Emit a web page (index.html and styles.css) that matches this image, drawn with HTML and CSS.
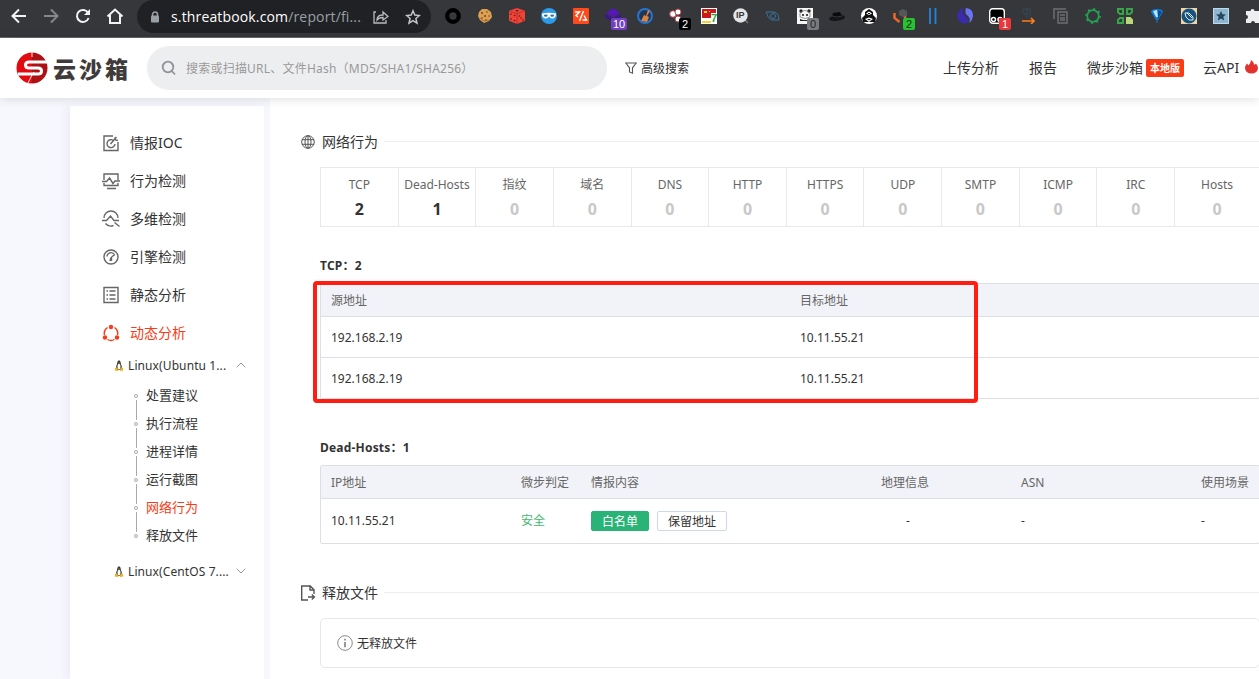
FILE: index.html
```html
<!DOCTYPE html>
<html lang="zh-CN">
<head>
<meta charset="utf-8">
<title>云沙箱</title>
<link rel="stylesheet" href="styles.css">
</head>
<body>
<div class="toolbar">
  <div class="nav-icons">
    <svg width="32" height="32" viewBox="0 0 32 32" fill="none" stroke="#f1f3f4" stroke-width="2"><path d="M26 16H13M19 9.500l-6.500 6.500 6.500 6.500"/></svg>
    <svg width="32" height="32" viewBox="0 0 32 32" fill="none" stroke="#85878a" stroke-width="2"><path d="M12 16h13M19 9.500l6.500 6.500-6.500 6.500"/></svg>
    <svg width="32" height="32" viewBox="0 0 32 32" fill="none" stroke="#f1f3f4" stroke-width="2"><path d="M24.200 13A6 6 0 1 0 24.600 18"/><path d="M26 9v6h-6z" fill="#f1f3f4" stroke="none"/></svg>
    <svg width="32" height="32" viewBox="0 0 32 32" fill="none" stroke="#f1f3f4" stroke-width="2"><path d="M11.500 16.500L19 9.500l7.500 7M14 15v8h10v-8"/></svg>
  </div>
  <div class="address">
    <svg class="lock" width="10" height="12" viewBox="0 0 10 12"><path d="M2.500 5V3.500a2.500 2.500 0 0 1 5 0V5" fill="none" stroke="#9aa0a6" stroke-width="1.500"/><rect x="1" y="4.500" width="8" height="7" rx="1" fill="#9aa0a6"/></svg>
    <span class="url"><b>s.threatbook.com</b>/report/fi...</span>
    <svg class="share" width="16" height="16" viewBox="0 0 16 16" fill="none" stroke="#b9bbbe" stroke-width="1.300"><path d="M3 3H1v11h12v-3M4 11c0-3 2-5 6-5V3l5 4.500L10 11V8.500C7 8.500 5.500 9 4 11z"/></svg>
    <svg class="star" width="16" height="16" viewBox="0 0 16 16" fill="none" stroke="#c3c5c8" stroke-width="1.500"><path d="M8 1.800l1.800 4.300 4.600.4-3.500 3 1.100 4.600L8 11.600l-4 2.500 1.100-4.600-3.500-3 4.600-.4z"/></svg>
  </div>
  <div class="extensions">
    <span class="ext"><svg viewBox="0 0 16 16"><circle cx="8" cy="8" r="5.800" fill="#37383b" stroke="#000" stroke-width="4.200"/></svg></span>
    <span class="ext"><svg viewBox="0 0 16 16"><path d="M2 4l3-3 5 0 4 3 1 5-3 4-5 2-4-3-2-4z" fill="#dca052"/><path d="M3 10l4 3 5-1" fill="none" stroke="#b87430"/><g fill="#76421c"><circle cx="5" cy="5" r="1"/><circle cx="10" cy="4" r=".8"/><circle cx="8" cy="8" r="1"/><circle cx="12" cy="8" r=".8"/><circle cx="5" cy="10" r=".8"/><circle cx="9" cy="12" r=".8"/></g></svg></span>
    <span class="ext"><svg viewBox="0 0 16 16"><path d="M8 0l8 2.700v10L8 16 0 12.700v-10z" fill="#ef4437"/><path d="M0 2.700l8 3 8-3M8 5.700V16" fill="none" stroke="#9c2620" stroke-width=".6"/><g fill="#5d1916"><ellipse cx="8" cy="2.800" rx="1.500" ry=".8"/><circle cx="2" cy="6" r=".8"/><circle cx="5.500" cy="7.500" r=".8"/><circle cx="2" cy="11" r=".8"/><circle cx="5.500" cy="12.500" r=".8"/><circle cx="10.500" cy="8" r=".8"/><circle cx="12" cy="10" r=".8"/><circle cx="14" cy="12" r=".8"/></g></svg></span>
    <span class="ext"><svg viewBox="0 0 16 16"><circle cx="8" cy="8" r="8" fill="#2b9bea"/><path d="M1 5.500Q8 4 15 5.500q0 5-4 5-2 0-3-2-1 2-3 2-4 0-4-5z" fill="#fff"/><ellipse cx="4.800" cy="7.600" rx="1.900" ry="1.200" fill="#2b6fb0"/><ellipse cx="11.200" cy="7.600" rx="1.900" ry="1.200" fill="#2b6fb0"/></svg></span>
    <span class="ext"><svg viewBox="0 0 16 16"><rect width="16" height="16" rx="1" fill="#ff4a1c"/><path d="M2 4h4.500L3 7.500l2 1.500M10.500 3L6.500 13M11 7.500l2.500 4.500H9.500" fill="none" stroke="#fff" stroke-width="1.400"/></svg></span>
    <span class="ext"><svg viewBox="0 0 16 16"><path d="M8 0l7 5-7 4-7-4z" fill="#5417b8"/><path d="M0 6l8 4 8-4v3l-8 5-8-5z" fill="#3c1590"/></svg><i class="count purple">10</i></span>
    <span class="ext"><svg viewBox="0 0 16 16"><circle cx="8" cy="8" r="7" fill="#263650" stroke="#2374d4" stroke-width="2"/><path d="M11 2l2 1-3 5 2 1-2 5-6-1 3-6 2 1z" fill="#d88743"/></svg></span>
    <span class="ext"><svg viewBox="0 0 16 16"><g fill="#fff" stroke="#ad4148" stroke-width="1"><circle cx="4" cy="6" r="3.300"/><circle cx="9" cy="4" r="3"/><circle cx="9" cy="11" r="3"/></g></svg><i class="count black">2</i></span>
    <span class="ext"><svg viewBox="0 0 16 16"><path fill="#fff" d="M0 0h16v16H0z"/><path fill="#c91820" d="M1 1h14v9H1z"/><path fill="#f4d52d" d="M3 3h3v2H3zM1 13h9v2H1zM8 3h1v1H8z"/></svg><i class="seven">7</i></span>
    <span class="ext"><svg viewBox="0 0 16 16"><path d="M12 12l3 3" stroke="#777" stroke-width="1.500"/><circle cx="7.500" cy="7.500" r="7.200" fill="#e4e5e8"/></svg><i class="ip">IP</i></span>
    <span class="ext"><svg viewBox="0 0 16 16" fill="none" stroke="#39759c"><path d="M1 4h8q5 1 5 8H7Q3 11 1 4z"/><circle cx="8" cy="8" r="2.500"/></svg></span>
    <span class="ext"><svg viewBox="0 0 16 16"><path fill="#f7f7f7" d="M0 0h16v16H0z"/><g fill="#222"><circle cx="4" cy="3" r="1.700"/><circle cx="12" cy="3" r="1.700"/><circle cx="6" cy="7" r="1.100"/><circle cx="10" cy="7" r="1.100"/><path d="M3 11l3 1 4 0 4-1v2H3z"/></g><path d="M3 5q5-5 10 0v4q-5 3-10 0z" fill="none" stroke="#666" stroke-width=".7"/></svg><i class="count gray">0</i></span>
    <span class="ext"><svg viewBox="0 0 16 16"><ellipse cx="8" cy="10" rx="8" ry="2.800" fill="#141518" transform="rotate(-7 8 10)"/><path d="M3 9l1-4 7-1 2 4q-4 3-10 1z" fill="#090a0b"/><path d="M3 8q5 2 10 0" fill="none" stroke="#55565a" stroke-width=".6"/></svg></span>
    <span class="ext"><svg viewBox="0 0 16 16"><circle cx="8" cy="8" r="8" fill="#fff"/><path d="M8 1l4 3 0 3 3 3-1 4H2l-1-4 3-3 0-3z" fill="#111"/><path d="M5 5.500l3-2 3 2-3 1.500zM4 11l4-1.500 4 1.500-4 3z" fill="#fff"/><path d="M7 5h2v1H7zM6 11h4l-2 1.500z" fill="#111"/></svg></span>
    <span class="ext"><svg viewBox="0 0 16 16"><path d="M1.500 5v5l5 4M12 5v5" fill="none" stroke="#f26524" stroke-width="2.500"/><path d="M6 3l4-2 4 2v5l-4 1-4-2z" fill="#55575b"/></svg><i class="count green">2</i></span>
    <span class="ext"><svg viewBox="0 0 16 16"><path d="M5 0v16M10.500 0v16" stroke="#2385db" stroke-width="1.800"/></svg></span>
    <span class="ext"><svg viewBox="0 0 16 16"><path d="M7 0C1 1-2 8 2 13q4 4 8 2 3-3-1-6Q4 5 7 0z" fill="#382ca9"/><path d="M9 0q7 1 7 7 0 5-4 8 2-4-1-7Q7 5 9 0z" fill="#6b74f7"/></svg></span>
    <span class="ext"><svg viewBox="0 0 16 16"><rect x=".7" y=".7" width="14.600" height="14.600" rx="3" fill="#000" stroke="#fff" stroke-width="1.400"/><g fill="none" stroke="#fff" stroke-width="1.500"><circle cx="4.500" cy="11.500" r="2"/><circle cx="11" cy="11.500" r="2"/></g></svg><i class="count red">1</i></span>
    <span class="ext"><svg viewBox="0 0 16 16"><path d="M10 1H4a2.500 2.500 0 0 0 0 5h2V1M9 1v9M6 6v4" fill="none" stroke="#354550" stroke-width="1.300"/><path d="M1 13h12M10 10l3 3-3 3" fill="none" stroke="#ff7b18" stroke-width="1.700"/></svg></span>
    <span class="ext"><svg viewBox="0 0 16 16" fill="none" stroke="#6d6f71" stroke-width="1.500"><path d="M1 11V1h12M5 15V4h9v11zM7 7h5M7 10h5M7 12h5"/></svg></span>
    <span class="ext"><svg viewBox="0 0 16 16" fill="none" stroke="#23a455"><circle cx="8" cy="8" r="5.800" stroke-width="1.700"/><circle cx="8" cy="8" r="7.100" stroke-width="1.600" stroke-dasharray="2 3.576"/></svg></span>
    <span class="ext"><svg viewBox="0 0 16 16" fill="none" stroke="#38a449" stroke-width="2"><path d="M1 1h5v5H3L1 4zM10 1h5v3l-2 2h-3zM1 12l2-2h3v5H1z"/><path fill="#b7d778" stroke="#b7d778" d="M10 10h3l2 2v3h-5z"/></svg></span>
    <span class="ext"><svg viewBox="0 0 16 16"><path d="M2 4q0-3 6-3t6 3L9 12H7z" fill="#137ad6"/><path d="M4 3l4-1 1 7H7z" fill="#bce7ff"/><path d="M9 2l4 2-4 7z" fill="#064f9e"/><path d="M7 12h2v3H7z" fill="#2e5578"/></svg></span>
    <span class="ext"><svg viewBox="0 0 16 16"><path fill="#ecd5a8" d="M0 0h16v16H0z"/><circle cx="8" cy="8" r="7.500" fill="#15527d"/><path d="M4 5h4l4 4v3H8L5 9zM6 5l5 5" fill="none" stroke="#e4edf1"/></svg></span>
    <span class="ext"><svg viewBox="0 0 16 16"><path fill="#8fb6d0" d="M0 0h16v16H0z"/><path fill="none" stroke="#c4d9e7" d="M.5.5h15v15H.5z"/><path d="M8 3l1.500 3.300 3.500.2-2.700 2.300.9 3.700L8 10.500l-3.200 2 .9-3.700L3 6.500l3.500-.2z" fill="#25475f"/></svg></span>
    <span class="ext"><svg viewBox="0 0 16 16"><path fill="#eceef0" d="M1 3h4.500a2 2 0 1 1 4 0H14v4a2 2 0 1 1 0 4v4h-4a2 2 0 1 0-4 0H1v-4a2 2 0 1 0 0-4z"/></svg></span>
  </div>
</div>

<header class="header">
  <div class="brand">
    <svg width="32" height="32" viewBox="0 0 32 32"><path d="M16 0.500a15.500 15.500 0 0 0 0 31z" fill="#e00c12"/><path d="M16 .5a15.500 15.500 0 0 1 0 31z" fill="#ad1116"/><path d="M31 10H13q-3.500 0-3.500 3t3.500 3h9q3.500 0 3.500 3T22 22H2" fill="none" stroke="#fff" stroke-width="3"/><path d="M18 20l-2 3-4 8M16 0v5" fill="none" stroke="#fff" stroke-width=".9"/></svg>
    <span class="brand-name">云沙箱</span>
  </div>
  <div class="search">
    <svg width="16" height="16" viewBox="0 0 16 16" fill="none" stroke="#919398" stroke-width="1.800"><circle cx="7" cy="7" r="5.300"/><path d="M10.800 11l3.200 3.500"/></svg>
    <span>搜索或扫描URL、文件Hash（MD5/SHA1/SHA256）</span>
  </div>
  <div class="advanced">
    <svg width="12" height="12" viewBox="0 0 12 12" fill="none" stroke="#555" stroke-width="1.100"><path d="M.8 1h10.400L7.500 5.800v5.400L4.500 10V5.800z"/></svg>
    <span>高级搜索</span>
  </div>
  <nav class="topnav">
    <span>上传分析</span><span>报告</span><span class="local">微步沙箱<b>本地版</b></span><span class="api">云API<svg width="13" height="14" viewBox="0 0 13 14"><path d="M6 0q3 2 3.500 5L11 3.500Q13 6 13 8.500 12 13.500 6.500 13.500T0 8.500q0-3 2-5l1.500 2Q5.500 4 6 0z" fill="#e5322e"/></svg></span>
  </nav>
</header>

<div class="layout">
  <aside class="sidebar">
    <div class="menu">
      <div class="item"><svg viewBox="0 0 18 18"><path d="M11 2H2v14.500h14V8"/><path d="M11.500 6.500A4 4 0 1 0 13 10M8.500 10l6-7M12.500 3.500l1 2.500 2.500.5"/></svg>情报IOC</div>
      <div class="item"><svg viewBox="0 0 18 18"><path d="M2 8V2h14v6M0 9.500h4.500L7.500 6l3.500 5.500 2-2.500h5M2 11v2.500h14V11M5 16.500h9"/></svg>行为检测</div>
      <div class="item"><svg viewBox="0 0 18 18"><path d="M2 8a7 7 0 0 1 14 0M0 10.500h4.500L8.500 6l3.500 4.500h5M3.500 13.500a7 7 0 0 0 8 2M12.500 12.500l5 4"/></svg>多维检测</div>
      <div class="item"><svg viewBox="0 0 18 18"><circle cx="9" cy="9" r="7"/><path d="M5 8.500A4 4 0 0 1 12 6M13 6.500L9.500 9M9 9.500l-1 3.500M9.500 9v4"/></svg>引擎检测</div>
      <div class="item"><svg viewBox="0 0 18 18"><path d="M2 1.500h14v15H2zM7.500 5h6M7.500 9h6M7.500 13h6M4.500 5H6M4.500 9H6M4.500 13H6"/></svg>静态分析</div>
      <div class="item active"><svg viewBox="0 0 18 18"><path d="M5.500 3.500A7 7 0 0 0 2.500 11M12.500 3.500A7 7 0 0 1 15.500 11M5.500 15.500a7 7 0 0 0 7 0"/><g fill="#f93b16" stroke="none"><circle cx="9" cy="3" r="2.200"/><circle cx="3" cy="13.500" r="2.200"/><circle cx="15" cy="13.500" r="2.200"/></g></svg>动态分析</div>
    </div>
    <div class="os">
      <svg class="tux" viewBox="0 0 10 12"><path d="M5 .5c2.200 0 1.500 3 2.500 5 1.500 3 .5 5.500-2.500 5.500S1 8.500 2.500 5.500c1-2 .3-5 2.500-5z" fill="#373737"/><ellipse cx="5" cy="7.200" rx="1.700" ry="3.200" fill="#fff"/><path d="M4 3h2l-1 1.200zM.5 9l2-1 2 3-1 .9L.5 11.500zM9.500 9l-2-1-2 3 1 .9 3-.4z" fill="#efaf20"/></svg>
      <span class="os-name">Linux(Ubuntu 1...</span>
      <svg class="chev" viewBox="0 0 10 6"><path d="M.7 5.300L5 1l4.300 4.300"/></svg>
    </div>
    <ul class="steps">
      <li>处置建议</li><li>执行流程</li><li>进程详情</li><li>运行截图</li><li class="active">网络行为</li><li>释放文件</li>
    </ul>
    <div class="os">
      <svg class="tux" viewBox="0 0 10 12"><path d="M5 .5c2.200 0 1.500 3 2.500 5 1.500 3 .5 5.500-2.500 5.500S1 8.500 2.500 5.500c1-2 .3-5 2.500-5z" fill="#373737"/><ellipse cx="5" cy="7.200" rx="1.700" ry="3.200" fill="#fff"/><path d="M4 3h2l-1 1.200zM.5 9l2-1 2 3-1 .9L.5 11.500zM9.500 9l-2-1-2 3 1 .9 3-.4z" fill="#efaf20"/></svg>
      <span class="os-name">Linux(CentOS 7....</span>
      <svg class="chev" viewBox="0 0 10 6"><path d="M.7.7L5 5 9.300.7"/></svg>
    </div>
  </aside>

  <main class="content">
    <h2 class="title"><svg width="16" height="16" viewBox="0 0 16 16"><circle cx="8" cy="8" r="6.300"/><ellipse cx="8" cy="8" rx="3" ry="6.300"/><path d="M8 1.700v12.600M2 5.700h12M2 10.300h12"/></svg>网络行为</h2>
    <div class="stats">
      <div class="on">TCP<b>2</b></div><div class="on">Dead-Hosts<b>1</b></div><div>指纹<b>0</b></div><div>域名<b>0</b></div><div>DNS<b>0</b></div><div>HTTP<b>0</b></div><div>HTTPS<b>0</b></div><div>UDP<b>0</b></div><div>SMTP<b>0</b></div><div>ICMP<b>0</b></div><div>IRC<b>0</b></div><div>Hosts<b>0</b></div>
    </div>
    <h3 class="sub">TCP：2</h3>
    <div class="marked">
      <div class="table tcp">
        <div class="row head"><span>源地址</span><span>目标地址</span></div>
        <div class="row"><span>192.168.2.19</span><span>10.11.55.21</span></div>
        <div class="row"><span>192.168.2.19</span><span>10.11.55.21</span></div>
      </div>
      <div class="highlight"></div>
    </div>
    <h3 class="sub dead">Dead-Hosts：1</h3>
    <div class="table hosts">
      <div class="row head"><span>IP地址</span><span>微步判定</span><span>情报内容</span><span>地理信息</span><span>ASN</span><span>使用场景</span></div>
      <div class="row"><span>10.11.55.21</span><span class="safe">安全</span><span class="tags"><i class="tag white-list">白名单</i><i class="tag">保留地址</i></span><span class="geo">-</span><span>-</span><span>-</span></div>
    </div>
    <h2 class="title files"><svg width="16" height="16" viewBox="0 0 16 16"><path d="M8 15H1.700V1h8.600L14 4.700V9M10 1v4h4" stroke-width="1.400"/><path d="M8 12h6M11.800 9.500L14.500 12l-2.700 2.500" stroke-width="1.300"/></svg>释放文件</h2>
    <div class="empty"><svg width="16" height="16" viewBox="0 0 16 16"><circle cx="8" cy="8" r="7.300" fill="none" stroke="#8b8b8b"/><path d="M8 3.800v1.700M8 7v5.200" stroke="#777" stroke-width="1.500"/></svg><span>无释放文件</span></div>
  </main>
</div>
</body>
</html>
```
FILE: styles.css
```css
* { box-sizing: border-box; }
body {
  margin: 0;
  width: 1259px;
  height: 679px;
  overflow: hidden;
  display: flex;
  flex-direction: column;
  background: #fff;
  color: #333;
  font: 12px/20px "Noto Sans", "Noto Sans CJK SC", sans-serif;
}
svg { display: block; flex: none; }
i { font-style: normal; }

/* browser toolbar */
.toolbar {
  height: 38px;
  flex: none;
  display: flex;
  overflow: hidden;
  background: #36373b;
  border-bottom: 1px solid #68696c;
}
.nav-icons { width: 137px; flex: none; display: flex; }
.address {
  width: 294px;
  height: 33px;
  flex: none;
  display: flex;
  align-items: center;
  padding-left: 13px;
  background: #202124;
  border-radius: 17px;
}
.url {
  width: 193px;
  margin-left: 11px;
  color: #9aa0a6;
  font: 14px/32px "Open Sans", sans-serif;
  letter-spacing: .15px;
  white-space: nowrap;
}
.url b { color: #fff; font-weight: 400; }
.share { margin-left: 9px; }
.star { margin-left: 16px; }
.extensions { display: flex; flex: none; margin-left: 6px; }
.ext { position: relative; width: 32px; height: 32px; flex: none; padding: 8px; }
.ext svg { width: 16px; height: 16px; }
.count {
  position: absolute;
  left: 18px;
  top: 18px;
  min-width: 12px;
  height: 12px;
  border-radius: 2px;
  color: #fff;
  font: 11px/12px "Liberation Sans", sans-serif;
  text-align: center;
}
.purple { left: 14px; width: 16px; background: #713fc0; }
.black { background: #000; }
.gray { background: #777b80; color: #222; }
.green { background: #26c230; color: #142a16; }
.red { background: #e8383b; }
.seven { position: absolute; left: 18px; top: 13px; color: #27a336; font: bold 11px/11px "Liberation Sans", sans-serif; background: #fff; }
.ip { position: absolute; left: 11px; top: 8px; color: #35363a; font: bold 9px/15px "Liberation Sans", sans-serif; }

/* site header */
.header {
  position: relative;
  z-index: 2;
  height: 60px;
  flex: none;
  display: flex;
  align-items: center;
  background: #fff;
  box-shadow: 0 1px 10px rgba(0, 0, 0, .13);
}
.brand { width: 131px; margin-left: 16px; flex: none; display: flex; align-items: center; }
.brand-name {
  margin: -1px 0 0 5px;
  color: #3f3b3a;
  font: 900 23px/32px "Noto Sans CJK SC", sans-serif;
  letter-spacing: 3px;
  white-space: nowrap;
}
.search {
  width: 460px;
  height: 44px;
  flex: none;
  display: flex;
  align-items: center;
  padding-left: 14px;
  border-radius: 22px;
  background: #edeef0;
  color: #999;
}
.search span { margin-left: 9px; padding-top: 2px; letter-spacing: .22px; white-space: nowrap; }
.advanced { width: 336px; flex: none; display: flex; align-items: center; padding-left: 18px; }
.advanced span { margin-left: 4px; padding-top: 2px; }
.topnav { display: flex; flex: none; font-size: 14px; white-space: nowrap; }
.topnav > span { margin-right: 30px; }
.topnav .local { display: flex; align-items: center; margin-right: 19px; }
.local b {
  width: 38px;
  height: 18px;
  margin-left: 3px;
  border-radius: 2px;
  background: #f93b16;
  color: #fff;
  font-size: 10px;
  line-height: 18px;
  text-align: center;
}
.topnav .api { display: flex; align-items: center; margin-right: 0; }
.api svg { margin-left: 6px; margin-top: -2px; }

/* page layout */
.layout { display: flex; flex: 1; min-height: 0; background: #f7f8fe; }
.sidebar {
  width: 194px;
  flex: none;
  margin: 8px 6px 0 70px;
  padding-top: 18px;
  background: #fff;
  box-shadow: -4px 0 8px rgba(60, 60, 90, .05);
}
.item {
  height: 38px;
  display: flex;
  align-items: center;
  padding-left: 32px;
  font-size: 14px;
}
.item svg { width: 18px; height: 18px; margin-right: 10px; fill: none; stroke: #666; stroke-width: 1.400; }
.active { color: #f93b16; }
.item.active svg { stroke: #f93b16; }
.os { height: 26px; display: flex; align-items: center; padding-left: 44px; }
.tux { width: 10px; height: 11px; margin-right: 4px; }
.os-name { width: 108px; padding-top: 2px; letter-spacing: .1px; white-space: nowrap; }
.chev { width: 10px; height: 6px; fill: none; stroke: #999; stroke-width: 1; }
.steps { list-style: none; margin: 3px 0 9px; padding: 0 0 0 63px; }
.steps li {
  position: relative;
  height: 28px;
  padding-left: 13px;
  font-size: 13px;
  line-height: 28px;
}
.steps li::before {
  content: "";
  position: absolute;
  left: 1px;
  top: 13px;
  width: 2px;
  height: 2px;
  border: 1px solid #aaa;
  border-radius: 50%;
}
.steps li:not(:last-child)::after {
  content: "";
  position: absolute;
  left: 3px;
  top: 19px;
  width: 1px;
  height: 20px;
  background: #aaa;
}

.content { flex: 1; min-width: 0; overflow: hidden; padding: 34px 0 0 30px; background: #fff; }
.title { display: flex; align-items: center; height: 20px; margin: 0; font-size: 14px; font-weight: 400; }
.title svg { margin-right: 6px; fill: none; stroke: #555; stroke-width: 1; }
.title::after { content: ""; flex: 1; height: 1px; margin: -2px 0 0 6px; background: #eee; }
.stats {
  width: 940px;
  height: 60px;
  margin: 15px 0 0 20px;
  display: grid;
  grid-template-columns: repeat(11, 77.650px) 1fr;
  border: 1px solid #e9e9ec;
}
.stats > div {
  display: flex;
  flex-direction: column;
  padding-top: 7px;
  border-right: 1px solid #e9e9ec;
  color: #666;
  text-align: center;
}
.stats > div:last-child { border: 0; }
.stats b { margin-top: 3px; color: #c8c8c8; font-size: 16px; line-height: 22px; }
.stats .on b { color: #333; }
.sub { height: 20px; margin: 29px 0 7px 20px; font-size: 12px; line-height: 20px; letter-spacing: .2px; }
.sub.dead { margin-top: 39px; }
.marked { position: relative; }
.highlight {
  position: absolute;
  left: 13px;
  top: -2px;
  width: 665px;
  height: 122px;
  border: 4px solid #ff1d12;
  border-radius: 4px;
}
.table { width: 940px; margin-left: 20px; border: 1px solid #dcdfe6; border-radius: 2px; }
.row { display: grid; align-items: center; height: 41px; padding-left: 10px; }
.row + .row { border-top: 1px solid #dcdfe6; }
.row.head { height: 32px; background: #f2f3f8; color: #666; }
.tcp .row { grid-template-columns: 469px 1fr; padding-top: 2px; }
.hosts .row { height: 45px; grid-template-columns: 190px 70px 290px 140px 180px 1fr; white-space: nowrap; }
.hosts .row.head { height: 32px; padding-top: 2px; }
.safe { color: #3fb96f; }
.tags { display: flex; }
.tag { height: 20px; margin-right: 8px; padding: 0 10px; border: 1px solid #ced8e6; border-radius: 2px; line-height: 19px; }
.tag.white-list { border-color: #2ab377; background: #2ab377; color: #fff; }
.geo { padding-left: 25px; }
.title.files { margin-top: 39px; }
.empty {
  width: 940px;
  height: 50px;
  margin: 15px 0 0 20px;
  padding-left: 16px;
  display: flex;
  align-items: center;
  gap: 4px;
  border: 1px solid #e7e7e7;
  border-radius: 5px;
}
.empty span { padding-top: 2px; }
```
